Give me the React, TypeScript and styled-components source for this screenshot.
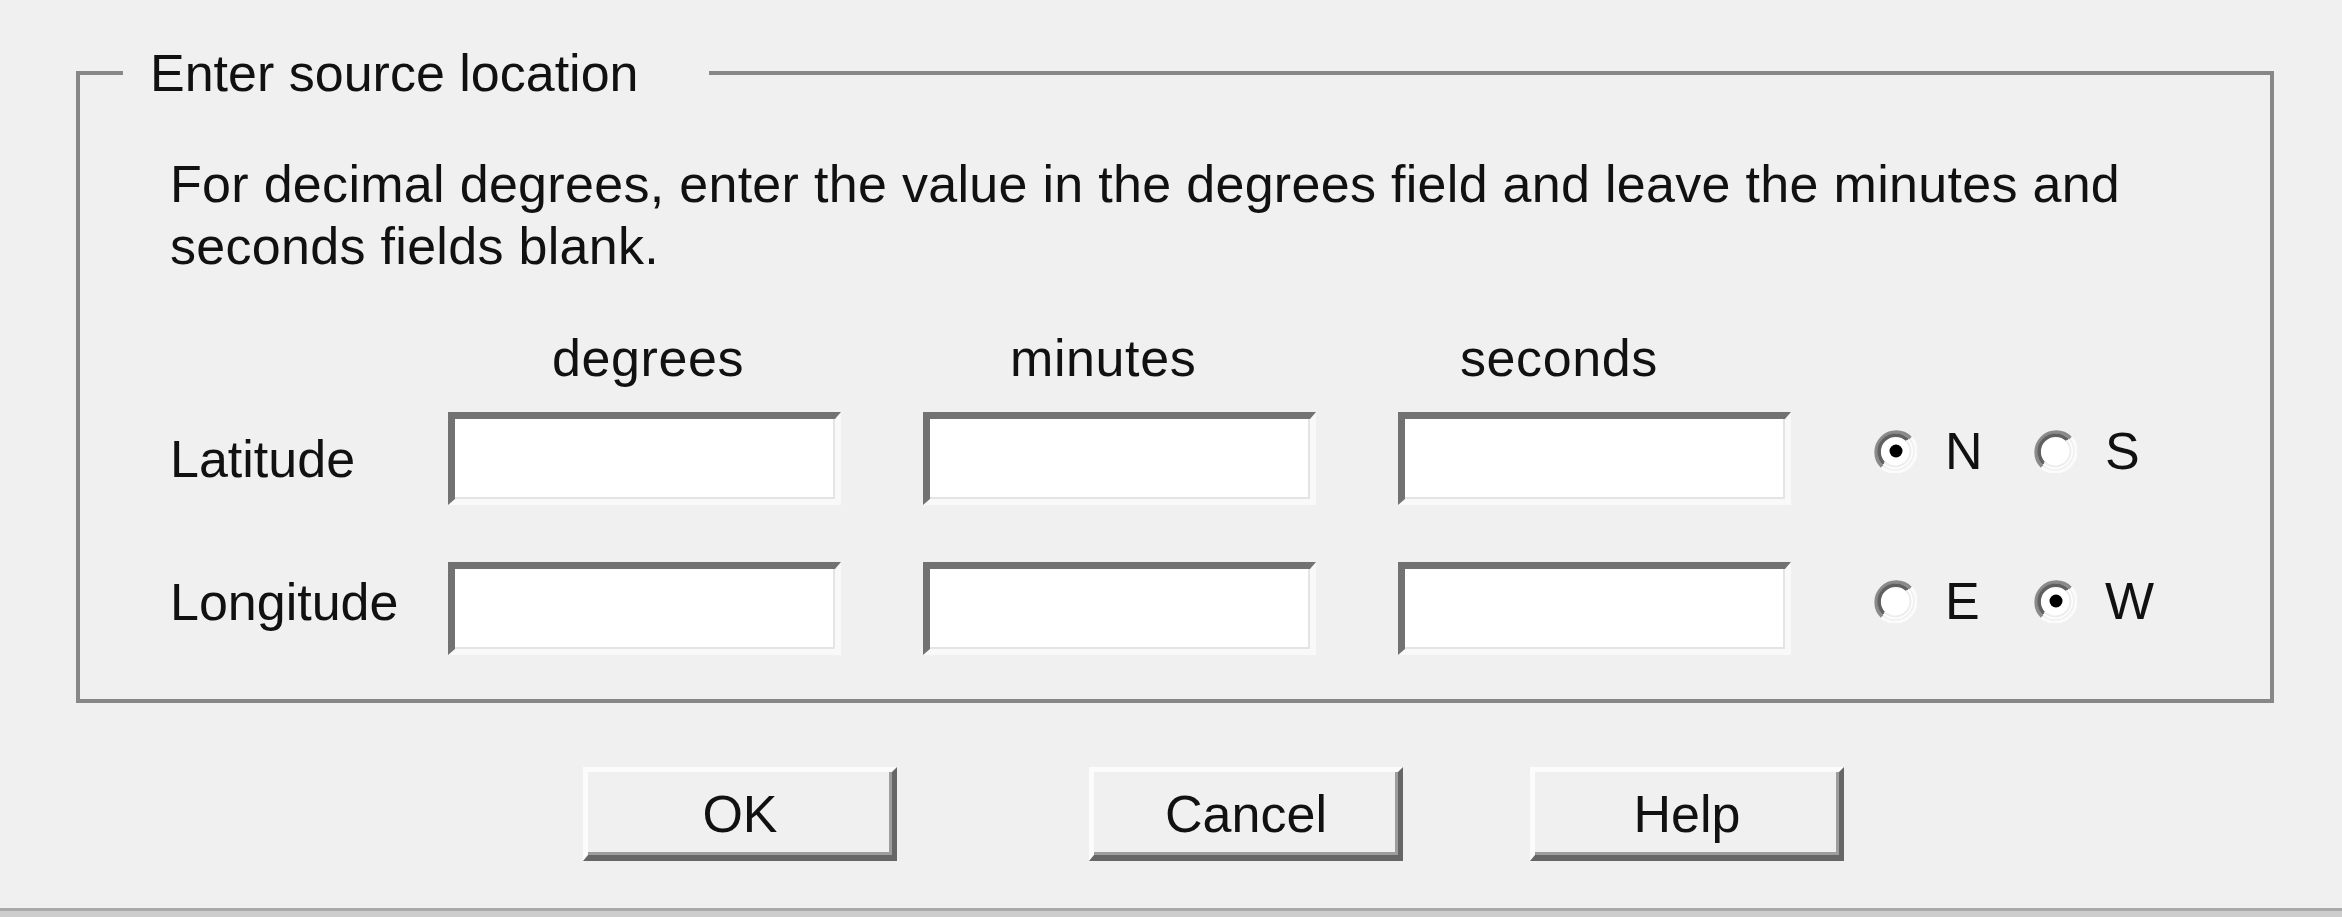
import React from "react";
import styled, { createGlobalStyle } from "styled-components";

const GlobalStyle = createGlobalStyle`
  html, body {
    margin: 0;
    padding: 0;
    background: #f0f0f0;
  }
  body {
    font-family: "Liberation Sans", Arial, sans-serif;
    color: #111;
  }
  * {
    box-sizing: border-box;
  }
`;

const Window = styled.div`
  width: 2342px;
  height: 917px;
  display: flex;
  flex-direction: column;
  background: #f0f0f0;
  font-size: 52px;
  overflow: hidden;
`;

const Content = styled.div`
  flex: 1;
  padding-top: 43px;
  border-bottom: 3px solid #a9a9a9;
`;

const BottomEdge = styled.div`
  height: 6px;
  background: #cdcdcd;
`;

// Group box ("Enter source location")
const GroupBox = styled.fieldset`
  margin: 0 0 0 76px;
  width: 2198px;
  padding: 0 0 44px 0;
  border: 4px solid #878787;
  min-inline-size: 0;
`;

const Legend = styled.legend`
  margin-left: 43px;
  padding: 0 70px 0 27px;
  font-size: 52px;
  line-height: 60px;
`;

const Inner = styled.div`
  padding-left: 90px;
`;

const Note = styled.p`
  margin: 50px 0 0 0;
  width: 2080px;
  font-size: 52px;
  line-height: 62px;
  letter-spacing: 0.3px;
`;

// Shared column layout for the header row and the two coordinate rows
const Row = styled.div<{ $top: number; $height: number }>`
  display: grid;
  grid-template-columns: 196px 393px 393px 393px auto;
  column-gap: 82px;
  align-items: center;
  margin-top: ${(p) => p.$top}px;
  height: ${(p) => p.$height}px;
`;

const ColLabel = styled.div<{ $indent: number }>`
  padding-left: ${(p) => p.$indent}px;
  line-height: 60px;
  white-space: nowrap;
  letter-spacing: 0.6px;
`;

const RowLabel = styled.div<{ $lift?: number }>`
  line-height: 60px;
  white-space: nowrap;
  margin-bottom: ${(p) => (p.$lift || 0) * 2}px;
`;

const TextField = styled.input`
  width: 393px;
  height: 93px;
  margin: 0;
  padding: 0 8px;
  background: #fff;
  border-style: solid;
  border-width: 7px 6px 6px 7px;
  border-color: #727272 #f9f9f9 #f9f9f9 #727272;
  box-shadow: inset -2px -2px 0 #e4e4e4;
  font: inherit;
  outline: none;
`;

const RadioGroup = styled.div`
  display: flex;
  margin-bottom: 16px;
`;

const RadioItem = styled.label`
  display: flex;
  align-items: center;
  gap: 28px;
  width: 160px;
  line-height: 60px;
`;

const RadioMark = styled.svg`
  width: 44px;
  height: 44px;
  flex: none;
`;

const Radio: React.FC<{ label: string; checked?: boolean }> = ({ label, checked }) => (
  <RadioItem>
    <RadioMark viewBox="0 0 44 44">
      <path d="M 37 7 A 21 21 0 0 1 7 37" fill="none" stroke="#fbfbfb" strokeWidth="3" />
      <circle cx="22" cy="22" r="18" fill="#fff" />
      <path d="M 37.5 9 A 20 20 0 0 0 9 37.5" fill="none" stroke="#8a8a8a" strokeWidth="3.5" />
      <path d="M 34.5 11 A 16.5 16.5 0 0 0 11 34.5" fill="none" stroke="#606060" strokeWidth="3.5" />
      <path d="M 33 11.5 A 15 15 0 0 1 11.5 33" fill="none" stroke="#ededed" strokeWidth="2" />
      {checked && <circle cx="23" cy="22" r="6.5" fill="#000" />}
    </RadioMark>
    <span>{label}</span>
  </RadioItem>
);

// Buttons
const ButtonRow = styled.div`
  display: flex;
  margin-top: 64px;
  padding-left: 583px;
`;

const DialogButton = styled.button<{ $gap?: number }>`
  width: 314px;
  height: 94px;
  margin: 0 0 0 ${(p) => p.$gap || 0}px;
  padding: 0;
  background: #f0f0f0;
  border-style: solid;
  border-width: 5px 5px 6px 5px;
  border-color: #fcfcfc #666666 #666666 #fcfcfc;
  box-shadow: inset -3px -3px 0 #9d9d9d;
  font: inherit;
  color: #111;
  line-height: 60px;
  cursor: pointer;
`;

export default function App() {
  return (
    <Window>
      <GlobalStyle />
      <Content>
        <GroupBox>
          <Legend>Enter source location</Legend>
          <Inner>
            <Note>
              For decimal degrees, enter the value in the degrees field and leave the minutes and seconds fields blank.
            </Note>

            <Row $top={51} $height={60}>
              <span />
              <ColLabel $indent={104}>degrees</ColLabel>
              <ColLabel $indent={87}>minutes</ColLabel>
              <ColLabel $indent={62}>seconds</ColLabel>
            </Row>

            <Row $top={24} $height={93}>
              <RowLabel>Latitude</RowLabel>
              <TextField />
              <TextField />
              <TextField />
              <RadioGroup>
                <Radio label="N" checked />
                <Radio label="S" />
              </RadioGroup>
            </Row>

            <Row $top={57} $height={93}>
              <RowLabel $lift={7}>Longitude</RowLabel>
              <TextField />
              <TextField />
              <TextField />
              <RadioGroup>
                <Radio label="E" />
                <Radio label="W" checked />
              </RadioGroup>
            </Row>
          </Inner>
        </GroupBox>

        <ButtonRow>
          <DialogButton>OK</DialogButton>
          <DialogButton $gap={192}>Cancel</DialogButton>
          <DialogButton $gap={127}>Help</DialogButton>
        </ButtonRow>
      </Content>
      <BottomEdge />
    </Window>
  );
}
